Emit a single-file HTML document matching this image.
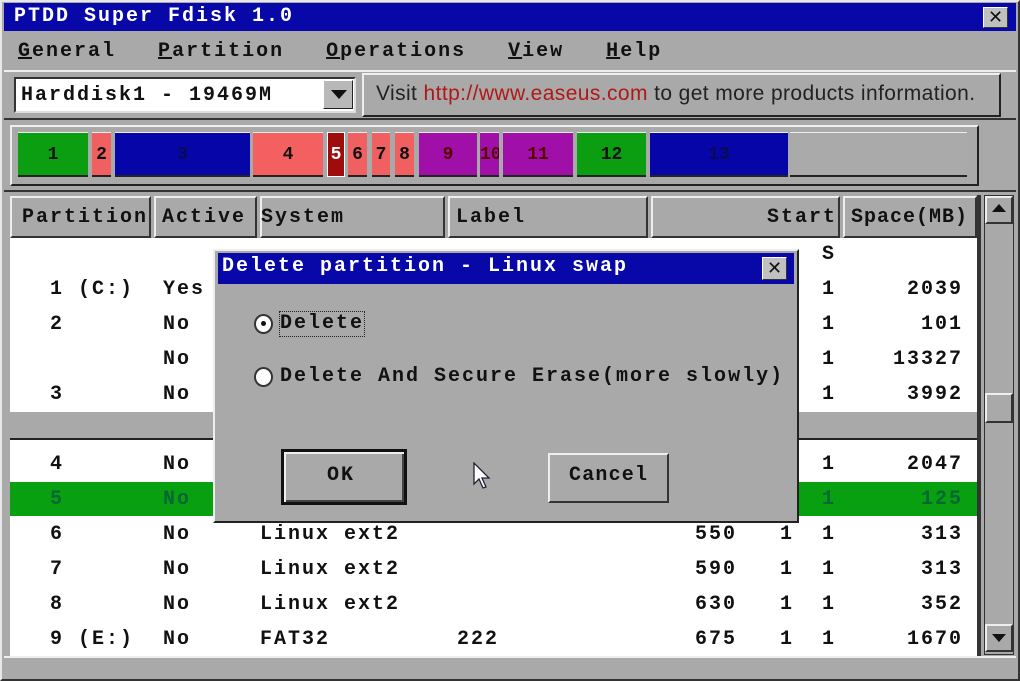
<!DOCTYPE html><html><head><style>
body{margin:0;width:1020px;height:681px;background:#a9a9a9;position:relative;overflow:hidden;font-family:"Liberation Mono",monospace;font-weight:bold;font-size:20px;letter-spacing:2px;color:#111}
.a{position:absolute;white-space:pre}
.bx{position:absolute;box-sizing:border-box}
.blk{position:absolute;top:132px;height:45px;box-sizing:border-box;border-top:1px solid #eee;border-bottom:2px solid #222;text-align:center;line-height:45px;font-size:18px;letter-spacing:0}
.row{position:absolute;left:10px;width:967px;height:35px}
.t{position:absolute;line-height:35px;white-space:pre}
</style></head><body>
<div class="bx" style="left:0;top:0;width:1020px;height:681px;border:2px solid #e8e8e8;border-right-color:#333;border-bottom-color:#333"></div>
<div class="bx" style="left:4px;top:3px;width:1012px;height:28px;background:#0808a8"></div>
<div class="a" style="left:14px;top:5px;color:#fff;line-height:24px">PTDD Super Fdisk 1.0</div>
<div class="bx" style="left:983px;top:7px;width:25px;height:21px;background:#c0c0c0;border:1px solid #fff;border-right-color:#333;border-bottom-color:#333;text-align:center;line-height:18px;font-size:18px;letter-spacing:0;font-weight:normal;font-family:'Liberation Sans'">✕</div>
<div class="a" style="left:18px;top:40px;line-height:24px"><u>G</u>eneral   <u>P</u>artition   <u>O</u>perations   <u>V</u>iew   <u>H</u>elp</div>
<div class="bx" style="left:4px;top:70px;width:1012px;height:2px;background:#eee"></div>
<div class="bx" style="left:14px;top:77px;width:342px;height:36px;background:#fff;border:2px solid #333;border-right-color:#ddd;border-bottom-color:#ddd"></div>
<div class="a" style="left:21px;top:84px;line-height:24px">Harddisk1 - 19469M</div>
<div class="bx" style="left:323px;top:80px;width:30px;height:29px;background:#b8b8b8;border:1px solid #fff;border-right-color:#222;border-bottom-color:#222"></div>
<div class="bx" style="left:331px;top:90px;width:0;height:0;border-left:8px solid transparent;border-right:8px solid transparent;border-top:9px solid #111"></div>
<div class="bx" style="left:362px;top:73px;width:639px;height:44px;border:2px solid #eee;border-right-color:#222;border-bottom-color:#222"></div>
<div class="a" style="left:376px;top:82px;font-family:'Liberation Sans',sans-serif;font-weight:normal;font-size:21px;letter-spacing:0.4px;color:#222;line-height:24px">Visit <span style="color:#b01818">http://www.easeus.com</span> to get more products information.</div>
<div class="bx" style="left:4px;top:118px;width:1012px;height:2px;background:#333"></div>
<div class="bx" style="left:10px;top:125px;width:969px;height:61px;border:2px solid #eee;border-right-color:#222;border-bottom-color:#222"></div>
<div class="blk" style="left:18px;width:70px;background:#0a9e10">1</div>
<div class="blk" style="left:92px;width:19px;background:#f06060">2</div>
<div class="blk" style="left:115px;width:135px;background:#0606a8;color:#0a0a50">3</div>
<div class="blk" style="left:253px;width:70px;background:#f46060">4</div>
<div class="blk" style="left:327px;width:18px;background:#a00c0c;color:#fff;border:1px solid #fff">5</div>
<div class="blk" style="left:348px;width:19px;background:#f06060">6</div>
<div class="blk" style="left:372px;width:18px;background:#f06060">7</div>
<div class="blk" style="left:395px;width:19px;background:#f06060">8</div>
<div class="blk" style="left:419px;width:58px;background:#a010a8;color:#500">9</div>
<div class="blk" style="left:480px;width:19px;background:#a010a8;color:#500;overflow:hidden">10</div>
<div class="blk" style="left:503px;width:70px;background:#a010a8;color:#500">11</div>
<div class="blk" style="left:577px;width:69px;background:#0a9e10">12</div>
<div class="blk" style="left:650px;width:138px;background:#0606a8;color:#0a0a50">13</div>
<div class="blk" style="left:790px;width:177px;background:#aaa;border-top:1px solid #eee"></div>
<div class="bx" style="left:4px;top:190px;width:1012px;height:2px;background:#333"></div>
<div class="bx" style="left:10px;top:238px;width:967px;height:418px;background:#fff"></div>
<div class="bx" style="left:10px;top:412px;width:967px;height:28px;background:#a9a9a9;border-bottom:2px solid #222"></div>
<div class="bx" style="left:10px;top:482px;width:967px;height:34px;background:#08a010"></div>
<div class="bx" style="left:10px;top:196px;width:141px;height:42px;border:2px solid #eee;border-right-color:#333;border-bottom-color:#333"></div>
<div class="bx" style="left:154px;top:196px;width:103px;height:42px;border:2px solid #eee;border-right-color:#333;border-bottom-color:#333"></div>
<div class="bx" style="left:260px;top:196px;width:185px;height:42px;border:2px solid #eee;border-right-color:#333;border-bottom-color:#333"></div>
<div class="bx" style="left:448px;top:196px;width:200px;height:42px;border:2px solid #eee;border-right-color:#333;border-bottom-color:#333"></div>
<div class="bx" style="left:651px;top:196px;width:189px;height:42px;border:2px solid #eee;border-right-color:#333;border-bottom-color:#333"></div>
<div class="bx" style="left:843px;top:196px;width:134px;height:42px;border:2px solid #eee;border-right-color:#333;border-bottom-color:#333"></div>
<div class="a" style="left:22px;top:206px">Partition</div>
<div class="a" style="left:162px;top:206px">Active</div>
<div class="a" style="left:261px;top:206px">System</div>
<div class="a" style="left:456px;top:206px">Label</div>
<div class="a" style="left:767px;top:206px">Start</div>
<div class="a" style="left:851px;top:206px;letter-spacing:1px">Space(MB)</div>
<div class="a" style="left:822px;top:243px">S</div>
<div class="row" style="top:272px"><span class="t" style="left:40px">1 (C:)</span><span class="t" style="left:153px">Yes</span><span class="t" style="left:812px">1</span><span class="t" style="right:14px">2039</span></div>
<div class="row" style="top:307px"><span class="t" style="left:40px">2</span><span class="t" style="left:153px">No</span><span class="t" style="left:812px">1</span><span class="t" style="right:14px">101</span></div>
<div class="row" style="top:342px"><span class="t" style="left:153px">No</span><span class="t" style="left:812px">1</span><span class="t" style="right:14px">13327</span></div>
<div class="row" style="top:377px"><span class="t" style="left:40px">3</span><span class="t" style="left:153px">No</span><span class="t" style="left:812px">1</span><span class="t" style="right:14px">3992</span></div>
<div class="row" style="top:447px"><span class="t" style="left:40px">4</span><span class="t" style="left:153px">No</span><span class="t" style="left:812px">1</span><span class="t" style="right:14px">2047</span></div>
<div class="row" style="top:482px;color:#063"><span class="t" style="left:40px">5</span><span class="t" style="left:153px">No</span><span class="t" style="left:812px">1</span><span class="t" style="right:14px">125</span></div>
<div class="row" style="top:517px"><span class="t" style="left:40px">6</span><span class="t" style="left:153px">No</span><span class="t" style="left:250px">Linux ext2</span><span class="t" style="left:685px">550</span><span class="t" style="left:770px">1</span><span class="t" style="left:812px">1</span><span class="t" style="right:14px">313</span></div>
<div class="row" style="top:552px"><span class="t" style="left:40px">7</span><span class="t" style="left:153px">No</span><span class="t" style="left:250px">Linux ext2</span><span class="t" style="left:685px">590</span><span class="t" style="left:770px">1</span><span class="t" style="left:812px">1</span><span class="t" style="right:14px">313</span></div>
<div class="row" style="top:587px"><span class="t" style="left:40px">8</span><span class="t" style="left:153px">No</span><span class="t" style="left:250px">Linux ext2</span><span class="t" style="left:685px">630</span><span class="t" style="left:770px">1</span><span class="t" style="left:812px">1</span><span class="t" style="right:14px">352</span></div>
<div class="row" style="top:622px"><span class="t" style="left:40px">9 (E:)</span><span class="t" style="left:153px">No</span><span class="t" style="left:250px">FAT32</span><span class="t" style="left:447px">222</span><span class="t" style="left:685px">675</span><span class="t" style="left:770px">1</span><span class="t" style="left:812px">1</span><span class="t" style="right:14px">1670</span></div>
<div class="bx" style="left:977px;top:195px;width:4px;height:462px;background:#333"></div>
<div class="bx" style="left:4px;top:656px;width:1012px;height:2px;background:#eee"></div>
<div class="bx" style="left:984px;top:195px;width:30px;height:460px;background:#a9a9a9;border:1px solid #333"></div>
<div class="bx" style="left:985px;top:196px;width:28px;height:28px;border:2px solid #eee;border-right-color:#333;border-bottom-color:#333"></div>
<div class="bx" style="left:992px;top:204px;border-left:7px solid transparent;border-right:7px solid transparent;border-bottom:8px solid #111"></div>
<div class="bx" style="left:985px;top:393px;width:28px;height:30px;border:2px solid #eee;border-right-color:#333;border-bottom-color:#333"></div>
<div class="bx" style="left:985px;top:624px;width:28px;height:28px;border:2px solid #eee;border-right-color:#333;border-bottom-color:#333"></div>
<div class="bx" style="left:992px;top:634px;border-left:7px solid transparent;border-right:7px solid transparent;border-top:8px solid #111"></div>
<div class="bx" style="left:213px;top:249px;width:586px;height:274px;background:#a9a9a9;border:2px solid #eee;border-right-color:#222;border-bottom-color:#222"></div>
<div class="bx" style="left:218px;top:253px;width:576px;height:31px;background:#0808a8"></div>
<div class="a" style="left:222px;top:255px;color:#fff;line-height:24px">Delete partition - Linux swap</div>
<div class="bx" style="left:762px;top:257px;width:25px;height:23px;background:#c0c0c0;border:1px solid #fff;border-right-color:#333;border-bottom-color:#333;text-align:center;line-height:20px;font-size:18px;letter-spacing:0;font-weight:normal;font-family:'Liberation Sans'">✕</div>
<div class="bx" style="left:254px;top:314px;width:19px;height:20px;border-radius:50%;background:#fff;border:2px solid #333"></div>
<div class="bx" style="left:261px;top:321px;width:5px;height:5px;border-radius:50%;background:#111"></div>
<div class="a" style="left:280px;top:312px;line-height:24px;outline:1px dotted #222">Delete</div>
<div class="bx" style="left:254px;top:367px;width:19px;height:20px;border-radius:50%;background:#fff;border:2px solid #333"></div>
<div class="a" style="left:280px;top:365px;line-height:24px">Delete And Secure Erase(more slowly)</div>
<div class="bx" style="left:281px;top:449px;width:126px;height:56px;border:3px solid #111;background:#a9a9a9;box-shadow:inset 2px 2px 0 #eee,inset -2px -2px 0 #444"></div>
<div class="a" style="left:327px;top:464px;line-height:24px">OK</div>
<div class="bx" style="left:548px;top:453px;width:121px;height:50px;border:2px solid #eee;border-right-color:#333;border-bottom-color:#333"></div>
<div class="a" style="left:569px;top:464px;line-height:24px;letter-spacing:1.2px">Cancel</div>
<svg class="bx" style="left:473px;top:462px" width="20" height="30" viewBox="0 0 20 30"><path d="M1 1 L1 22 L6 17 L10 26 L13 25 L9 16 L16 16 Z" fill="#fff" stroke="#223" stroke-width="1.3"/></svg>
</body></html>
